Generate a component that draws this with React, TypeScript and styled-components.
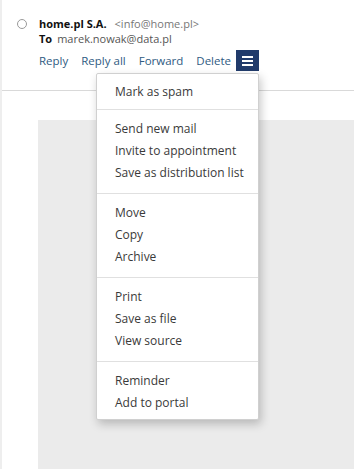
import React from "react";
import styled, { createGlobalStyle } from "styled-components";

const Global = createGlobalStyle`
  html, body { margin: 0; padding: 0; background: #fff; }
  body { font-family: "Open Sans", "Noto Sans", sans-serif; font-size: 12px; color: #333; }
`;

const Page = styled.div`
  position: relative;
  width: 354px;
  height: 469px;
  overflow: hidden;
  border-left: 2px solid #eeeeee;
  box-sizing: border-box;
  display: flex;
  flex-direction: column;
`;

const Header = styled.div`
  display: flex;
  flex-direction: column;
  padding: 16px 0 0 0;
  height: 91px;
  box-sizing: border-box;
  border-bottom: 1px solid #d9d9d9;
  flex-shrink: 0;
`;

const FromRow = styled.div`
  display: flex;
  align-items: center;
  height: 15px;
`;

const Radio = styled.span`
  width: 8px;
  height: 8px;
  border: 1px solid #9a9a9a;
  border-radius: 50%;
  margin: 0 12px 0 15px;
  flex-shrink: 0;
`;

const Text = styled.span`
  display: inline-block;
  height: 15px;
  line-height: 15px;
  font-size: 11px;
  white-space: nowrap;
`;

const Sender = styled(Text)`
  font-weight: 700;
  color: #111;
`;

const Address = styled(Text)`
  color: #777;
  margin-left: 8px;
`;

const ToRow = styled.div`
  display: flex;
  align-items: center;
  height: 15px;
  padding-left: 37px;
`;

const ToLabel = styled(Text)`
  font-weight: 700;
  color: #111;
  margin-right: 5px;
`;

const ToAddr = styled(Text)`
  color: #555;
`;

const Actions = styled.div`
  display: flex;
  align-items: center;
  gap: 13px;
  margin-top: 4px;
  padding-left: 37px;
  height: 21px;
`;

const ActionLink = styled(Text)`
  color: #2f5b82;
  font-size: 11.5px;
  height: 16px;
  line-height: 16px;
`;

const MenuButton = styled.div`
  width: 23px;
  height: 21px;
  background: #213b6b;
  display: flex;
  flex-direction: column;
  justify-content: center;
  align-items: center;
  gap: 2px;
  margin-left: -8px;
`;

const Bar = styled.span`
  width: 11px;
  height: 2px;
  background: #fff;
`;

const Body = styled.div`
  flex: 1;
  padding: 29px 0 0 36px;
  display: flex;
`;

const Preview = styled.div`
  flex: 1;
  background: #ebebeb;
`;

const Menu = styled.div`
  position: absolute;
  left: 94px;
  top: 73px;
  width: 161px;
  background: #fff;
  border: 1px solid #d0d0d0;
  border-radius: 2px;
  box-shadow: 2px 4px 10px rgba(0, 0, 0, 0.22);
  display: flex;
  flex-direction: column;
`;

const Group = styled.div<{ $pos: "first" | "mid" | "last" }>`
  display: flex;
  flex-direction: column;
  padding: ${(p) =>
    p.$pos === "first" ? "7px 0 6px" : p.$pos === "last" ? "8px 0 5px" : "8px 0 9px"};
  border-top: ${(p) => (p.$pos === "first" ? "none" : "1px solid #e0e0e0")};
`;

const Item = styled.div`
  height: 22px;
  line-height: 22px;
  padding-left: 18px;
  color: #3a3a3a;
  font-size: 12px;
  white-space: nowrap;
`;

const groups = [
  ["Mark as spam"],
  ["Send new mail", "Invite to appointment", "Save as distribution list"],
  ["Move", "Copy", "Archive"],
  ["Print", "Save as file", "View source"],
  ["Reminder", "Add to portal"],
];

export default function App() {
  return (
    <>
      <Global />
      <Page>
        <Header>
          <FromRow>
            <Radio />
            <Sender>home.pl S.A.</Sender>
            <Address>&lt;info@home.pl&gt;</Address>
          </FromRow>
          <ToRow>
            <ToLabel>To</ToLabel>
            <ToAddr>marek.nowak@data.pl</ToAddr>
          </ToRow>
          <Actions>
            <ActionLink>Reply</ActionLink>
            <ActionLink>Reply all</ActionLink>
            <ActionLink>Forward</ActionLink>
            <ActionLink>Delete</ActionLink>
            <MenuButton>
              <Bar />
              <Bar />
              <Bar />
            </MenuButton>
          </Actions>
        </Header>
        <Body>
          <Preview />
        </Body>
        <Menu>
          {groups.map((g, i) => (
            <Group
              key={i}
              $pos={i === 0 ? "first" : i === groups.length - 1 ? "last" : "mid"}
            >
              {g.map((t) => (
                <Item key={t}>{t}</Item>
              ))}
            </Group>
          ))}
        </Menu>
      </Page>
    </>
  );
}
